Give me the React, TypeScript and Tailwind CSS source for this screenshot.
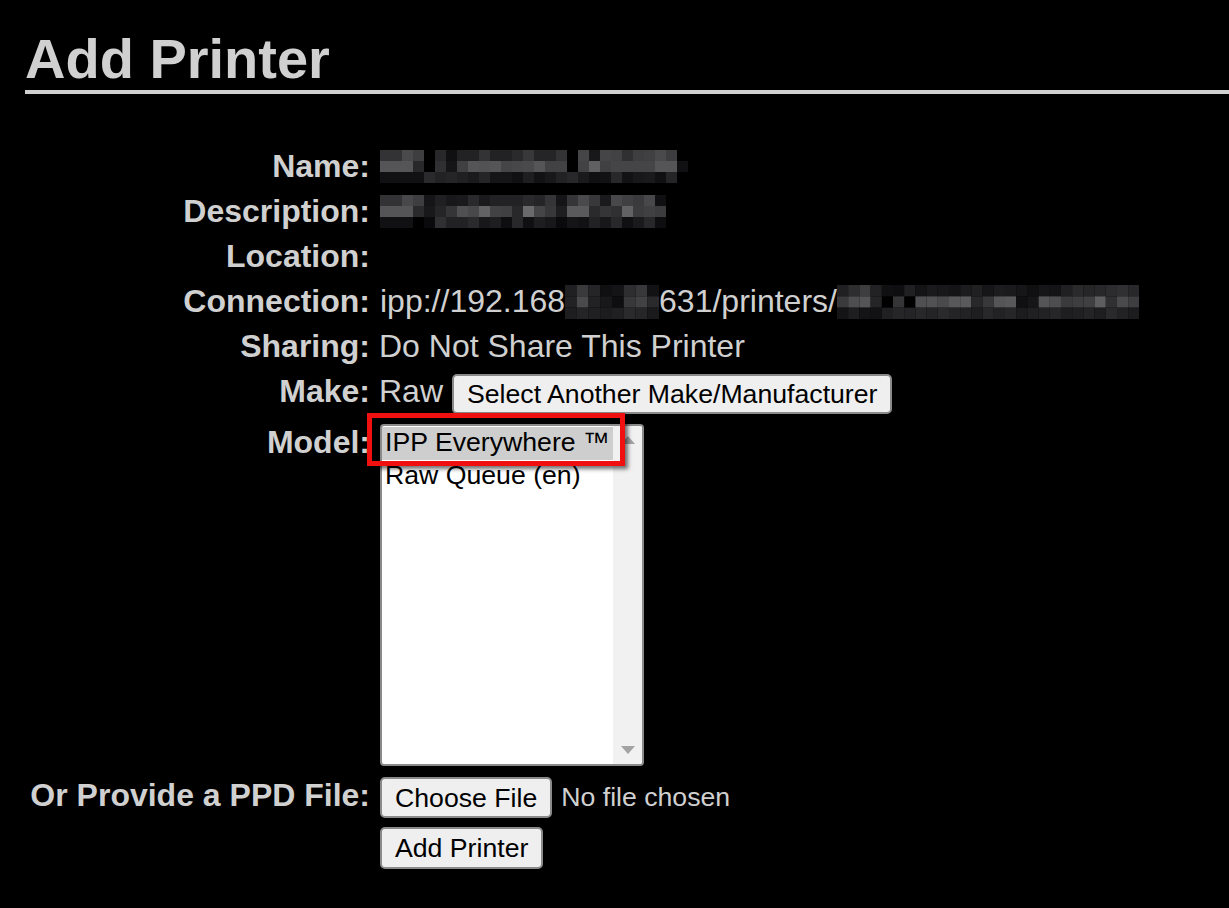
import React from 'react';

// pixelated (redacted) text blocks, values are gray levels per cell
const nameCells = [
  [0x33, 0x33, 0x4a, 0x3e, 0, 0x28, 0x10, 0x22, 0x22, 0x33, 0x22, 0x22, 0x2a, 0x38, 0x25, 0x25, 0x33, 0, 0x45, 0x18, 0x45, 0x42, 0x30, 0x3e, 0x40, 0x4a, 0x3d, 0],
  [0x55, 0x55, 0x55, 0x28, 0, 0x30, 0x15, 0x40, 0x55, 0x52, 0x55, 0x45, 0x48, 0x4a, 0x55, 0x42, 0x42, 0, 0x42, 0x60, 0x40, 0x45, 0x45, 0x45, 0x45, 0x55, 0x55, 0x10],
  [0x11, 0x11, 0x11, 0x11, 0x2a, 0x22, 0x25, 0x20, 0x1a, 0x25, 0x15, 0x15, 0x10, 0x1e, 0x12, 0x18, 0x22, 0x28, 0x1a, 0x10, 0x12, 0x28, 0x12, 0x18, 0x1a, 0x10, 0x25, 0],
];

const descCells = [
  [0x33, 0x33, 0x48, 0x3e, 0x15, 0x20, 0x18, 0x1a, 0x2a, 0x1a, 0x22, 0x22, 0x22, 0x2a, 0x25, 0x35, 0x15, 0x35, 0x4a, 0x38, 0x1a, 0x48, 0x40, 0x3a, 0x48, 0x10],
  [0x55, 0x55, 0x55, 0x2a, 0x18, 0x25, 0x35, 0x50, 0x48, 0x62, 0x42, 0x40, 0x28, 0x6a, 0x45, 0x38, 0x1e, 0x5a, 0x5a, 0x2a, 0x35, 0x30, 0x62, 0x3c, 0x40, 0x3c],
  [0x11, 0x11, 0x11, 0, 0x0a, 0x30, 0x22, 0x22, 0x2a, 0x18, 0x1e, 0x0e, 0x28, 0x10, 0x1e, 0x18, 0x0a, 0x15, 0x12, 0x22, 0x18, 0x28, 0x10, 0x1a, 0x28, 0x0e],
];

const ipCells = [
  [0x20, 0x3a, 0x25, 0x10, 0x14, 0x2e, 0x38, 0x12],
  [0x22, 0x4a, 0x22, 0x18, 0x0e, 0x38, 0x42, 0x2a],
  [0x1e, 0x24, 0x20, 0x1c, 0x20, 0x2a, 0x26, 0x1a],
];

const queueCells = [
  [0x20, 0x2e, 0x3e, 0x22, 0x10, 0x0e, 0x20, 0x14, 0x1a, 0x18, 0x14, 0x1c, 0x20, 0x16, 0x1c, 0x1a, 0x16, 0x10, 0x16, 0x14, 0x20, 0x2a, 0x26, 0x28, 0x2c, 0x30, 0x28],
  [0x3a, 0x4e, 0x55, 0x25, 0, 0x35, 0, 0x50, 0x52, 0x4a, 0x58, 0x5a, 0x28, 0x38, 0x55, 0x58, 0x10, 0x16, 0x55, 0x4e, 0x3a, 0x3e, 0x40, 0x5e, 0x30, 0x4a, 0x3e],
  [0x14, 0x1e, 0x14, 0x12, 0x20, 0x26, 0x24, 0x28, 0x24, 0x2a, 0x24, 0x22, 0x1e, 0x28, 0x22, 0x26, 0x1c, 0x20, 0x22, 0x26, 0x1e, 0x20, 0x24, 0x1e, 0x2a, 0x22, 0x1c],
];

function Mosaic({ cells, cell, h }: { cells: number[][]; cell: number; h: number }) {
  const cols = Math.max(...cells.map((r) => r.length));
  const w = cols * cell;
  const rh = h / cells.length;
  return (
    <svg width={w} height={h} viewBox={`0 0 ${w} ${h}`} className="block shrink-0">
      {cells.map((row, ri) =>
        row.map((v, ci) =>
          v === 0 ? null : (
            <rect
              key={`${ri}-${ci}`}
              x={ci * cell}
              y={ri * rh}
              width={cell}
              height={rh}
              fill={`rgb(${v},${v},${v + 2})`}
            />
          )
        )
      )}
    </svg>
  );
}

function Btn({ children, className = '' }: { children: React.ReactNode; className?: string }) {
  return (
    <button
      type="button"
      className={`bg-[#efefef] border-2 border-[#8a8a8a] rounded-[5px] text-black text-[26.67px] leading-[30px] flex items-center ${className}`}
    >
      {children}
    </button>
  );
}

function Label({ children }: { children: React.ReactNode }) {
  return <div className="text-right font-bold whitespace-nowrap">{children}</div>;
}

export default function App() {
  return (
    <div
      className="min-h-[908px] bg-black text-[#d0d0d0] pl-[25px] pt-[27px]"
      style={{ fontFamily: '"Liberation Sans", Arial, sans-serif' }}
    >
      <h1 className="text-[56px] font-bold leading-[63px] border-b-4 border-[#d0d0d0]">Add Printer</h1>

      <div className="mt-[50px] grid grid-cols-[345px_1fr] gap-x-[10px] text-[32px] leading-[37px]">
        <div className="contents">
          <div className="h-[45px] flex items-center justify-end"><Label>Name:</Label></div>
          <div className="h-[45px] flex items-center"><Mosaic cells={nameCells} cell={11} h={33} /></div>
        </div>
        <div className="contents">
          <div className="h-[45px] flex items-center justify-end"><Label>Description:</Label></div>
          <div className="h-[45px] flex items-center"><Mosaic cells={descCells} cell={11} h={33} /></div>
        </div>
        <div className="contents">
          <div className="h-[45px] flex items-center justify-end"><Label>Location:</Label></div>
          <div className="h-[45px]" />
        </div>
        <div className="contents">
          <div className="h-[45px] flex items-center justify-end"><Label>Connection:</Label></div>
          <div className="h-[45px] flex items-center whitespace-nowrap">
            <span>ipp://192.168</span>
            <Mosaic cells={ipCells} cell={11.75} h={34} />
            <span>631/printers/</span>
            <Mosaic cells={queueCells} cell={11.2} h={34} />
          </div>
        </div>
        <div className="contents">
          <div className="h-[45px] flex items-center justify-end"><Label>Sharing:</Label></div>
          <div className="h-[45px] flex items-center -ml-px">Do Not Share This Printer</div>
        </div>
        <div className="contents">
          <div className="h-[45px] flex items-center justify-end"><Label>Make:</Label></div>
          <div className="h-[45px] flex items-center gap-[9px] -ml-px">
            <span>Raw</span>
            <Btn className="h-[40px] px-[13px] mt-[4px]">Select Another Make/Manufacturer</Btn>
          </div>
        </div>
        <div className="contents">
          <div className="pt-[10px] flex justify-end"><Label>Model:</Label></div>
          <div className="pt-[10px]">
            <div className="relative w-[264px] h-[342px]">
              <div className="w-full h-full bg-white border-2 border-[#8a8a8a] rounded-[4px] flex overflow-hidden text-black text-[26.67px] leading-[31px]">
                <div className="flex-1 pt-[1px]">
                  <div className="bg-[#cecece] pl-[3px] pb-[2px]">IPP Everywhere ™</div>
                  <div className="pl-[3px] pb-[2px]">Raw Queue (en)</div>
                </div>
                <div className="w-[29px] bg-[#f1f1f1] flex flex-col items-center justify-between py-[10px]">
                  <svg width="14" height="8" viewBox="0 0 14 8"><path d="M7 0 L14 8 L0 8 Z" fill="#a3a3a3" /></svg>
                  <svg width="14" height="8" viewBox="0 0 14 8"><path d="M0 0 L14 0 L7 8 Z" fill="#a3a3a3" /></svg>
                </div>
              </div>
              <div className="absolute left-[-13px] top-[-11px] w-[258px] h-[53px] border-[5px] border-[#f01010] shadow-[3px_3px_4px_rgba(0,0,0,0.55)]" />
            </div>
          </div>
        </div>
        <div className="contents">
          <div className="mt-[11px] flex justify-end"><Label>Or Provide a PPD File:</Label></div>
          <div className="mt-[11px] flex flex-col items-start gap-[9px]">
            <div className="flex items-center gap-[10px]">
              <Btn className="h-[41px] px-[13px]">Choose File</Btn>
              <span className="text-[26.67px] -ml-px">No file chosen</span>
            </div>
            <Btn className="h-[42px] px-[13px]">Add Printer</Btn>
          </div>
        </div>
      </div>
    </div>
  );
}
